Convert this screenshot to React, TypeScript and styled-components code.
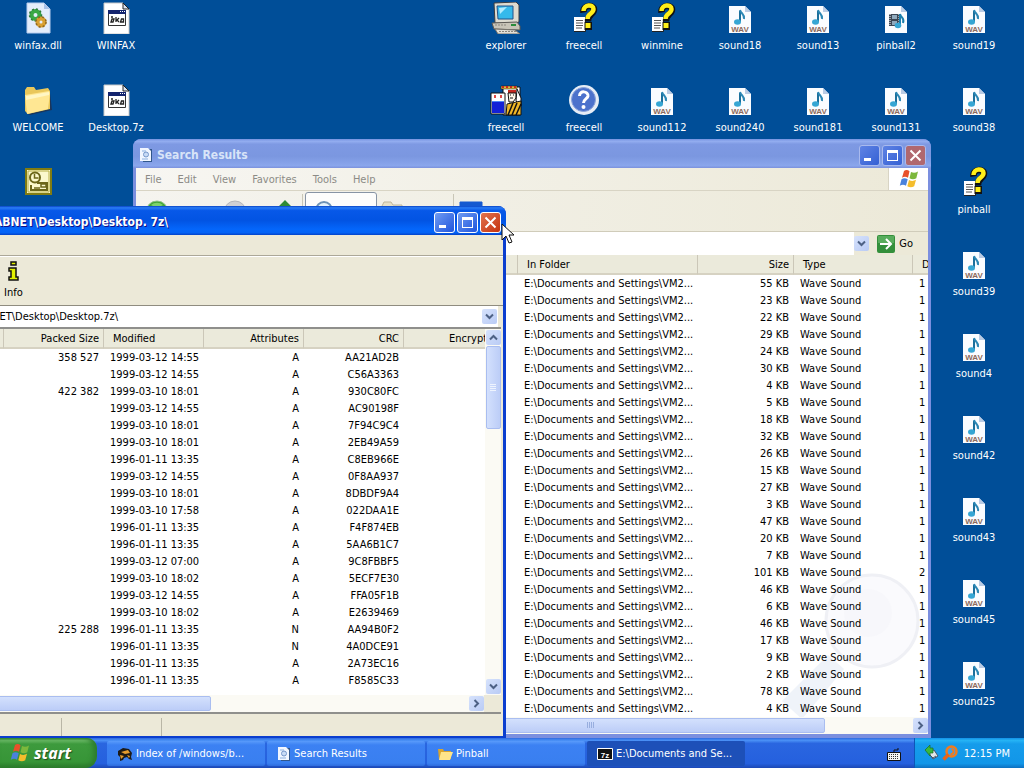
import React from 'react';
import styled, { createGlobalStyle, css } from 'styled-components';

const files = [
  { size: '55 KB', date: '1' },
  { size: '23 KB', date: '1' },
  { size: '22 KB', date: '1' },
  { size: '29 KB', date: '1' },
  { size: '24 KB', date: '1' },
  { size: '30 KB', date: '1' },
  { size: '4 KB', date: '1' },
  { size: '5 KB', date: '1' },
  { size: '18 KB', date: '1' },
  { size: '32 KB', date: '1' },
  { size: '26 KB', date: '1' },
  { size: '15 KB', date: '1' },
  { size: '27 KB', date: '1' },
  { size: '3 KB', date: '1' },
  { size: '47 KB', date: '1' },
  { size: '20 KB', date: '1' },
  { size: '7 KB', date: '1' },
  { size: '101 KB', date: '2' },
  { size: '46 KB', date: '1' },
  { size: '6 KB', date: '1' },
  { size: '46 KB', date: '1' },
  { size: '17 KB', date: '1' },
  { size: '9 KB', date: '1' },
  { size: '2 KB', date: '1' },
  { size: '78 KB', date: '1' },
  { size: '4 KB', date: '1' },
];

const entries = [
  ['358 527', '1999-03-12 14:55', 'A', 'AA21AD2B'],
  ['', '1999-03-12 14:55', 'A', 'C56A3363'],
  ['422 382', '1999-03-10 18:01', 'A', '930C80FC'],
  ['', '1999-03-12 14:55', 'A', 'AC90198F'],
  ['', '1999-03-10 18:01', 'A', '7F94C9C4'],
  ['', '1999-03-10 18:01', 'A', '2EB49A59'],
  ['', '1996-01-11 13:35', 'A', 'C8EB966E'],
  ['', '1999-03-12 14:55', 'A', '0F8AA937'],
  ['', '1999-03-10 18:01', 'A', '8DBDF9A4'],
  ['', '1999-03-10 17:58', 'A', '022DAA1E'],
  ['', '1996-01-11 13:35', 'A', 'F4F874EB'],
  ['', '1996-01-11 13:35', 'A', '5AA6B1C7'],
  ['', '1999-03-12 07:00', 'A', '9C8FBBF5'],
  ['', '1999-03-10 18:02', 'A', '5ECF7E30'],
  ['', '1999-03-12 14:55', 'A', 'FFA05F1B'],
  ['', '1999-03-10 18:02', 'A', 'E2639469'],
  ['225 288', '1996-01-11 13:35', 'N', 'AA94B0F2'],
  ['', '1996-01-11 13:35', 'N', '4A0DCE91'],
  ['', '1996-01-11 13:35', 'A', '2A73EC16'],
  ['', '1996-01-11 13:35', 'A', 'F8585C33'],
];

type IconKind = 'dll' | 'exe' | 'folder' | 'outlook' | 'computer' | 'help' | 'cards' | 'question' | 'wav' | 'midi';

// col / row on the 78x82 desktop grid
const shortcuts: { label: string; kind: IconKind; col: number; row: number }[] = [
  { label: 'winfax.dll', kind: 'dll', col: 1, row: 1 },
  { label: 'WINFAX', kind: 'exe', col: 2, row: 1 },
  { label: 'WELCOME', kind: 'folder', col: 1, row: 2 },
  { label: 'Desktop.7z', kind: 'exe', col: 2, row: 2 },
  { label: '', kind: 'outlook', col: 1, row: 3 },
  { label: 'explorer', kind: 'computer', col: 7, row: 1 },
  { label: 'freecell', kind: 'help', col: 8, row: 1 },
  { label: 'winmine', kind: 'help', col: 9, row: 1 },
  { label: 'sound18', kind: 'wav', col: 10, row: 1 },
  { label: 'sound13', kind: 'wav', col: 11, row: 1 },
  { label: 'pinball2', kind: 'midi', col: 12, row: 1 },
  { label: 'sound19', kind: 'wav', col: 13, row: 1 },
  { label: 'freecell', kind: 'cards', col: 7, row: 2 },
  { label: 'freecell', kind: 'question', col: 8, row: 2 },
  { label: 'sound112', kind: 'wav', col: 9, row: 2 },
  { label: 'sound240', kind: 'wav', col: 10, row: 2 },
  { label: 'sound181', kind: 'wav', col: 11, row: 2 },
  { label: 'sound131', kind: 'wav', col: 12, row: 2 },
  { label: 'sound38', kind: 'wav', col: 13, row: 2 },
  { label: 'pinball', kind: 'help', col: 13, row: 3 },
  { label: 'sound39', kind: 'wav', col: 13, row: 4 },
  { label: 'sound4', kind: 'wav', col: 13, row: 5 },
  { label: 'sound42', kind: 'wav', col: 13, row: 6 },
  { label: 'sound43', kind: 'wav', col: 13, row: 7 },
  { label: 'sound45', kind: 'wav', col: 13, row: 8 },
  { label: 'sound25', kind: 'wav', col: 13, row: 9 },
];

const DesktopIcon = ({ kind }: { kind: IconKind }) => {
  switch (kind) {
    case 'wav':
      return (
        <svg width='32' height='32' viewBox='0 0 32 32'>
          <path d='M5 4h16l6 6v21H5z' fill='#fafcff' />
          <path d='M21 4v6h6z' fill='#b9cbe4' />
          <path d='M16 9v11' stroke='#1b6f9c' strokeWidth='2' fill='none' />
          <path d='M16 8c1 4 5 4 4 9' stroke='#2a86b4' strokeWidth='2' fill='none' />
          <ellipse cx='13.5' cy='20' rx='3.5' ry='2.8' fill='#36a6d4' />
          <IconText x='16' y='30' fill='#8c6a5c'>
            WAV
          </IconText>
        </svg>
      );
    case 'midi':
      return (
        <svg width='32' height='32' viewBox='0 0 32 32'>
          <path d='M5 4h16l6 6v21H5z' fill='#fafcff' />
          <path d='M21 4v6h6z' fill='#b9cbe4' />
          <path d='M9 12h11v12H9z' fill='#3b4654' />
          <path d='M12 13h5v4h-5zM12 19h5v4h-5z' fill='#8fa9bd' />
          <path d='M10 12v12M19 12v12' stroke='#fff' strokeDasharray='1 1' />
          <path d='M20 12v11M20 12c1 4 5 4 3 9' stroke='#1b7fae' strokeWidth='2' fill='none' />
          <ellipse cx='18' cy='23.5' rx='3.3' ry='2.7' fill='#36a6d4' />
        </svg>
      );
    case 'dll':
      return (
        <svg width='32' height='32' viewBox='0 0 32 32'>
          <path d='M5 1h17l6 6v24H5z' fill='#e4edfb' stroke='#b9cdee' />
          <path d='M22 1v6h6z' fill='#a9c2e8' />
          <circle cx='13.5' cy='13' r='4' fill='none' stroke='#3aa845' strokeWidth='4' />
          <circle cx='13.5' cy='13' r='6' fill='none' stroke='#2c7a3a' strokeWidth='1.5' strokeDasharray='2 2' />
          <circle cx='19' cy='20' r='3.5' fill='none' stroke='#d9a032' strokeWidth='4' />
          <circle cx='19' cy='20' r='5' fill='none' stroke='#8f6a24' strokeWidth='1.5' strokeDasharray='2 2' />
        </svg>
      );
    case 'exe':
      return (
        <svg width='32' height='32' viewBox='0 0 32 32'>
          <path d='M4 1h19l6 6v25H4z' fill='#fff' stroke='#c9c9c9' />
          <path d='M23 1v6h6z' fill='#dce4f0' stroke='#222' />
          <path d='M8.5 8.5h17v15h-17z' fill='#fff' stroke='#333' />
          <path d='M8 8h18v4H8z' fill='#14246e' />
          <path d='M20 9h1v1h-1zM22 9h1v1h-1zM24 9h1v1h-1z' fill='#fff' />
          <path
            d='M11 20l1-3h2l-1 3zM16 15v5M19 16l-2 2 2 2M20.5 20l1-3h2v3zM11 15h2'
            stroke='#222'
            strokeWidth='1.3'
            fill='none'
          />
        </svg>
      );
    case 'folder':
      return (
        <svg width='32' height='32' viewBox='0 0 32 32'>
          <path d='M6 30l22-5V9l2 17-22 5z' fill='#1b355a' />
          <path d='M3 6l2-3h7l2 3 12-2 2 3v18L6 30 3 27z' fill='#e9c75b' />
          <path d='M3 11l24-4 1 2-2 16-21 5z' fill='#ffe793' />
          <path d='M4 12l23-4v3L4 16z' fill='#fff6c4' />
        </svg>
      );
    case 'outlook':
      return (
        <svg width='32' height='32' viewBox='0 0 32 32'>
          <path d='M4 3h25v25H4z' fill='#fbf8cc' stroke='#827c12' strokeWidth='2' />
          <path d='M6 5h21v21H6z' fill='none' stroke='#b6ae45' />
          <path d='M15 17h10v7H9v-5' fill='none' stroke='#6c671a' strokeWidth='2' />
          <circle cx='13' cy='11.5' r='5' fill='#fbf8cc' stroke='#6c671a' strokeWidth='2' />
          <path d='M12.5 8v4h4M19 18h5v3h-5zM12 22h6' fill='none' stroke='#6c671a' strokeWidth='1.5' />
        </svg>
      );
    case 'computer':
      return (
        <svg width='32' height='32' viewBox='0 0 32 32'>
          <path d='M4 1l22-1 3 3v17l-4 1H5z' fill='#dedbd0' stroke='#3c3c40' />
          <path d='M7 4h16v13H8z' fill='#35b9ec' stroke='#23528a' />
          <path d='M9 6l8-1-7 7z' fill='#b2ecff' />
          <path d='M2 21l25-1 3 4v4l-26-1z' fill='#c9c4b8' stroke='#5c5955' />
          <path d='M5 27l20 1 5 4H8z' fill='#e4e0d7' stroke='#77736b' />
          <path d='M9 29.5h17M5 23h12' stroke='#8b877f' strokeDasharray='2 1' />
          <path d='M21 23h5' stroke='#2a8c3b' strokeWidth='2' />
        </svg>
      );
    case 'help':
      return (
        <svg width='32' height='32' viewBox='0 0 32 32'>
          <path d='M6 15h11v14H6z' fill='#fff' />
          <path d='M17.5 18v11.5H6' fill='none' stroke='#222' />
          <path d='M8 18.500h7M8 21h7M8 23.5h7M8 26h6' stroke='#555' />
          <path d='M15.5 10.500c-1-8 10.500-8 10.500-3 0 5-6 4-6 12' fill='none' stroke='#111' strokeWidth='6.5' />
          <path d='M16.5 20h7.500v8h-7.500z' fill='#111' />
          <path d='M15.500 9c0-7 10-7 10-2 0 5-6 4-6 10' fill='none' stroke='#ffef19' strokeWidth='4.5' />
          <path d='M17.500 21h5v5h-5z' fill='#ffef19' />
        </svg>
      );
    case 'cards':
      return (
        <svg width='32' height='32' viewBox='0 0 32 32'>
          <path d='M13 3h17v28H13z' fill='#fff' stroke='#111' />
          <path d='M11 2h16v3H11z' fill='#e0b93c' stroke='#111' strokeWidth='.5' />
          <path d='M12 3h14' stroke='#c6281f' strokeDasharray='2 2' strokeWidth='2' />
          <path d='M18 6h8v3h-8z' fill='#c6281f' />
          <path d='M18 9h8v5l-3 4h-4z' fill='#fff6e8' stroke='#111' />
          <path d='M20 11h1M23 11h1M20 14h3' stroke='#111' />
          <path d='M27 5l4 9v8l-5-5z' fill='#fff' stroke='#111' />
          <path d='M17 20l14-3v14H16z' fill='#f0b728' stroke='#111' />
          <path d='M18 31l5-12M22 31l5-12M26 31l5-11' stroke='#111' strokeWidth='1.5' />
          <path d='M1 9h14v21H1z' fill='#fff' stroke='#111' />
          <path d='M2 17h12v12H2z' fill='#1320d6' />
          <path d='M4 11h2v3H4zM10 11h2v3h-2z' fill='#e04a45' />
          <path d='M2 17.500h12' stroke='#4d86f5' />
        </svg>
      );
    case 'question':
      return (
        <svg width='32' height='32' viewBox='0 0 32 32'>
          <circle cx='16' cy='16' r='15' fill='#e6edf6' />
          <circle cx='15.5' cy='15.5' r='12' fill='#4c72cc' stroke='#8ba4db' />
          <path d='M11.5 12c0-6 9-5 8.500 0-.5 3-4.500 3-4.500 7' fill='none' stroke='#fff' strokeWidth='3' />
          <circle cx='15.5' cy='23' r='2' fill='#fff' />
        </svg>
      );
  }
};

const WindowsFlag = ({ size }: { size: number }) => (
  <svg width={size} height={size} viewBox='0 0 20 20'>
    <path d='M5 2c2-1.500 4-1 5.500.3L9 8.800C7 7.500 5 7.500 3 8.700z' fill='#e8502a' />
    <path d='M12 3c2.500 1.300 4.500 1 7-.5l-1.700 6.700c-2.300 1.500-4.800 1.200-6.800.1z' fill='#7cb83c' />
    <path d='M2.500 10.200C4.500 9 6.500 9 8.700 10.300L7 16.800C5 15.500 3 15.500.8 16.800z' fill='#4a82dc' />
    <path d='M10 11c2.500 1.200 4.500 1.200 7-.2l-1.800 6.500c-2.300 1.400-4.700 1.300-6.900 0z' fill='#f5bd2c' />
  </svg>
);

const ResultIcon = () => (
  <svg width='14' height='16' viewBox='0 0 14 16'>
    <path d='M4 2h9v13H4z' fill='#31578c' />
    <path d='M1 1h8l3 3v10H1z' fill='#f1f6ff' />
    <path d='M3 4h4M3 12h6' stroke='#8bb0df' />
    <circle cx='7' cy='7.5' r='2.5' fill='#c8dbf6' stroke='#7496c9' />
  </svg>
);

const MinimizeGlyph = () => (
  <svg width='15' height='15' viewBox='0 0 15 15'>
    <path d='M2 10h7v3H2z' fill='currentColor' />
  </svg>
);

const MaximizeGlyph = () => (
  <svg width='15' height='15' viewBox='0 0 15 15'>
    <path d='M2 2h11v11H2zM3 5v7h9V5z' fill='currentColor' fillRule='evenodd' />
  </svg>
);

const CloseGlyph = () => (
  <svg width='15' height='15' viewBox='0 0 15 15'>
    <path d='M2.500 2.500l10 10M12.500 2.500l-10 10' stroke='currentColor' strokeWidth='2' />
  </svg>
);

const rotations = { down: 0, left: 90, up: 180, right: 270 };

const Chevron = ({ to }: { to: keyof typeof rotations }) => (
  <svg width='9' height='9' viewBox='0 0 9 9'>
    <path
      d='M1 2.500l3.500 3.500L8 2.500'
      fill='none'
      stroke='#4d6185'
      strokeWidth='2'
      transform={`rotate(${rotations[to]} 4.5 4.5)`}
    />
  </svg>
);

const Controls = ({ active }: { active: boolean }) => (
  <ControlGroup>
    <ControlButton $active={active} aria-label='Minimize'>
      <MinimizeGlyph />
    </ControlButton>
    <ControlButton $active={active} aria-label='Maximize'>
      <MaximizeGlyph />
    </ControlButton>
    <ControlButton $active={active} $close aria-label='Close'>
      <CloseGlyph />
    </ControlButton>
  </ControlGroup>
);

const SearchWindow = () => (
  <SearchFrame>
    <TitleBar $active={false}>
      <ResultIcon />
      <Title>Search Results</Title>
      <Controls active={false} />
    </TitleBar>
    <SearchContent>
      <MenuBar>
        {['File', 'Edit', 'View', 'Favorites', 'Tools', 'Help'].map((name) => (
          <MenuItem key={name}>{name}</MenuItem>
        ))}
        <Brand>
          <WindowsFlag size={20} />
        </Brand>
      </MenuBar>
      <SearchToolbar>
        <ToolButton aria-label='Back' $width={78}>
          <svg width='24' height='24' viewBox='0 0 24 24'>
            <circle cx='12' cy='12' r='11' fill='#42a536' stroke='#8fc487' />
            <path d='M6 5a9 9 0 0 1 12 0l-6 3z' fill='#7fd26b' />
          </svg>
        </ToolButton>
        <ToolButton aria-label='Forward' $width={50}>
          <svg width='24' height='24' viewBox='0 0 24 24'>
            <circle cx='12' cy='12' r='11' fill='#cfd0d3' stroke='#b5b6ba' />
          </svg>
        </ToolButton>
        <ToolButton aria-label='Up' $width={30}>
          <svg width='24' height='24' viewBox='0 0 24 24'>
            <path d='M3 8h9l2 3h8v11H3z' fill='#f0d56f' />
            <path d='M12 0l7 7h-4v7H9V7H5z' fill='#2f8a35' />
          </svg>
        </ToolButton>
        <Divider />
        <ToolButton aria-label='Search' $width={72} $pressed>
          <svg width='24' height='24' viewBox='0 0 24 24'>
            <circle cx='12' cy='9' r='8' fill='#e3f2fb' stroke='#6e93b5' strokeWidth='2' />
          </svg>
        </ToolButton>
        <ToolButton aria-label='Folders' $width={74}>
          <svg width='24' height='24' viewBox='0 0 24 24'>
            <path d='M2 6l2-4h7l2 3h9v15H2z' fill='#e6e0c6' stroke='#bdb69d' />
          </svg>
        </ToolButton>
        <Divider />
        <ToolButton aria-label='Views' $width={36}>
          <svg width='24' height='24' viewBox='0 0 24 24'>
            <path d='M1 2h22v20H1z' fill='#fff' stroke='#1559d0' />
            <path d='M1 2h22v5H1z' fill='#1559d0' />
          </svg>
        </ToolButton>
      </SearchToolbar>
      <AddressRow>
        <AddressInput aria-label='Address' />
        <ArrowButton aria-label='Show addresses'>
          <Chevron to='down' />
        </ArrowButton>
        <GoButton>
          <svg width='18' height='18' viewBox='0 0 18 18'>
            <rect width='18' height='18' rx='2' fill='#338f3b' />
            <path d='M1 1h16v7H1z' fill='#57ac5c' />
            <path d='M3 9h11M9 4l5 5-5 5' fill='none' stroke='#fff' strokeWidth='2' />
          </svg>
          Go
        </GoButton>
      </AddressRow>
      <ListArea>
        <Magnifier viewBox='0 0 150 160' width='150' height='160'>
          <path d='M8 136l46-46 16 14-42 50z' fill='#eff3f9' />
          <circle cx='98' cy='56' r='46' fill='#fafafd' stroke='#eff0f5' strokeWidth='3' />
          <circle cx='94' cy='48' r='24' fill='#f7f7fb' />
        </Magnifier>
        <ListTable>
          <colgroup>
            <col style={{ width: 382 }} />
            <col style={{ width: 180 }} />
            <col style={{ width: 96 }} />
            <col style={{ width: 119 }} />
            <col />
          </colgroup>
          <thead>
            <tr>
              <HeadCell />
              <HeadCell>In Folder</HeadCell>
              <HeadCell $right>Size</HeadCell>
              <HeadCell>Type</HeadCell>
              <HeadCell>D</HeadCell>
            </tr>
          </thead>
          <tbody>
            {files.map(({ size, date }, i) => (
              <tr key={i}>
                <Cell />
                <Cell>E:\Documents and Settings\VM2...</Cell>
                <Cell $right>{size}</Cell>
                <Cell>Wave Sound</Cell>
                <Cell>{date}</Cell>
              </tr>
            ))}
          </tbody>
        </ListTable>
      </ListArea>
      <HorizontalScroll $offset={221}>
        <HorizontalThumb $share={82}>
          <svg width='8' height='7' viewBox='0 0 8 7'>
            <path d='M.5 0v6M2.500 0v6M4.500 0v6M6.500 0v6' stroke='#98aede' />
          </svg>
        </HorizontalThumb>
        <ArrowButton aria-label='Scroll right'>
          <Chevron to='right' />
        </ArrowButton>
      </HorizontalScroll>
    </SearchContent>
  </SearchFrame>
);

const ArchiveWindow = () => (
  <ArchiveFrame>
    <TitleBar $active>
      <Title>ABNET\Desktop\Desktop. 7z\</Title>
      <Controls active />
    </TitleBar>
    <ArchiveContent>
      <MenuStrip />
      <ArchiveToolbar>
        <InfoButton>
          <svg width='14' height='21' viewBox='0 0 14 21'>
            <path d='M5 1h5v3H5zM3 7h7v9h2v3H3v-3h2v-6H3z' fill='#e2f000' stroke='#111' strokeWidth='1.5' />
          </svg>
          Info
        </InfoButton>
      </ArchiveToolbar>
      <PathRow>
        <PathInput aria-label='Path' defaultValue='NET\Desktop\Desktop.7z\' />
        <ArrowButton aria-label='Show folders'>
          <Chevron to='down' />
        </ArrowButton>
      </PathRow>
      <Panel>
        <PanelBody>
          <ListTable>
            <colgroup>
              <col style={{ width: 16 }} />
              <col style={{ width: 100 }} />
              <col style={{ width: 100 }} />
              <col style={{ width: 100 }} />
              <col style={{ width: 100 }} />
              <col />
            </colgroup>
            <thead>
              <tr>
                <HeadCell />
                <HeadCell $right>Packed Size</HeadCell>
                <HeadCell>Modified</HeadCell>
                <HeadCell $right>Attributes</HeadCell>
                <HeadCell $right>CRC</HeadCell>
                <HeadCell $indent={45}>Encrypted</HeadCell>
              </tr>
            </thead>
            <tbody>
              {entries.map(([packed, modified, attributes, crc], i) => (
                <tr key={i}>
                  <Cell />
                  <Cell $right>{packed}</Cell>
                  <Cell>{modified}</Cell>
                  <Cell $right>{attributes}</Cell>
                  <Cell $right>{crc}</Cell>
                  <Cell />
                </tr>
              ))}
            </tbody>
          </ListTable>
          <VerticalScroll>
            <ArrowButton aria-label='Scroll up'>
              <Chevron to='up' />
            </ArrowButton>
            <VerticalThumb>
              <svg width='7' height='8' viewBox='0 0 7 8'>
                <path d='M0 .5h6M0 2.500h6M0 4.500h6M0 6.500h6' stroke='#eef4fe' />
              </svg>
            </VerticalThumb>
            <ArrowButton aria-label='Scroll down'>
              <Chevron to='down' />
            </ArrowButton>
          </VerticalScroll>
        </PanelBody>
        <PanelFoot>
          <HorizontalScroll>
            <HorizontalThumb $share={45} />
            <ArrowButton aria-label='Scroll right'>
              <Chevron to='right' />
            </ArrowButton>
          </HorizontalScroll>
        </PanelFoot>
      </Panel>
      <StatusBar>
        <StatusCell $width={74} />
        <StatusCell $width={100} />
      </StatusBar>
    </ArchiveContent>
  </ArchiveFrame>
);

const App = () => {
  return (
    <>
      <GlobalStyle />
      <Screen>
        <Desktop>
          <IconGrid>
            {shortcuts.map(({ label, kind, col, row }) => (
              <Shortcut key={`${col}-${row}`} $col={col} $row={row}>
                <DesktopIcon kind={kind} />
                <span>{label}</span>
              </Shortcut>
            ))}
          </IconGrid>
          <SearchWindow />
          <ArchiveWindow />
          <Pointer width='13' height='21' viewBox='0 0 13 21'>
            <path d='M1 1v16l4-4 3 7 3-1-3-7h5z' fill='#fff' stroke='#111' />
          </Pointer>
        </Desktop>
        <Taskbar>
          <StartButton>
            <WindowsFlag size={20} />
            start
          </StartButton>
          <Tasks>
            <TaskButton>
              <svg width='16' height='16' viewBox='0 0 16 16'>
                <path d='M1 5l5-3 6 1 3 4-1 4 1 3-3-1-2-2-3 1-1 2-3 1v-4l-2-2z' fill='#1d1a16' />
                <path d='M4 6l7-2 2 3-5 1zM3 9l4 1-3 3zM10 9l3 1-1 2z' fill='#e69c2d' />
              </svg>
              Index of /windows/b...
            </TaskButton>
            <TaskButton>
              <ResultIcon />
              Search Results
            </TaskButton>
            <TaskButton>
              <svg width='16' height='16' viewBox='0 0 16 16'>
                <path d='M1 3h5l1 2h7v8H2z' fill='#d9a530' />
                <path d='M4 6h12l-3 8H2z' fill='#ffe48a' />
              </svg>
              Pinball
            </TaskButton>
            <TaskButton $active>
              <svg width='16' height='16' viewBox='0 0 16 16'>
                <path d='M.5 2.500h15v11H.5z' fill='#111' stroke='#fff' />
                <IconText x='8' y='12' fill='#fff' fontSize='10'>
                  7z
                </IconText>
              </svg>
              E:\Documents and Se...
            </TaskButton>
          </Tasks>
          <LanguageButton aria-label='Keyboard'>
            <svg width='14' height='13' viewBox='0 0 14 13'>
              <path d='M7 4V2h4V0' fill='none' stroke='#111' />
              <path d='M.5 4.500h13v8H.5z' fill='#f4f4f0' stroke='#111' />
              <path d='M2 6.500h10M2 8.500h10M2 10.500h10' stroke='#333' strokeDasharray='1 1' />
            </svg>
          </LanguageButton>
          <Tray>
            <svg width='16' height='16' viewBox='0 0 16 16'>
              <path d='M5 7l5 7 5-3-4-6z' fill='#e3e7ea' stroke='#47566a' />
              <path d='M7 10l3 3 3-2' fill='none' stroke='#47566a' />
              <path d='M2 5l5-5v3h3v5H7v3z' fill='#3bb83a' stroke='#186b26' strokeWidth='.7' />
            </svg>
            <svg width='16' height='16' viewBox='0 0 16 16'>
              <circle cx='9.5' cy='6.5' r='5' fill='#3aa0ee' stroke='#f07c1c' strokeWidth='2.5' />
              <path d='M9.500 4a2.500 2.500 0 1 1-1 5' fill='none' stroke='#f07c1c' strokeWidth='2' />
              <path d='M6.500 9.500l-5 5' stroke='#e8651a' strokeWidth='3.5' />
            </svg>
            <time>12:15 PM</time>
          </Tray>
        </Taskbar>
      </Screen>
    </>
  );
};

export default App;

const GlobalStyle = createGlobalStyle`
  * {
    box-sizing: border-box;
  }
  body {
    margin: 0;
    overflow: hidden;
    font-family: 'DejaVu Sans Condensed', 'DejaVu Sans', sans-serif;
    font-size: 11px;
    line-height: 13px;
    color: #000;
  }
  button,
  input {
    margin: 0;
    padding: 0;
    border: 0;
    background: none;
    font: inherit;
    color: inherit;
  }
  svg {
    display: block;
    flex: none;
  }
`;

const Screen = styled.div`
  display: flex;
  flex-direction: column;
  height: 100vh;
`;

const Desktop = styled.main`
  position: relative;
  flex: 1;
  min-height: 0;
  overflow: hidden;
  background-color: #004e98;
`;

const IconGrid = styled.div`
  display: grid;
  grid-template-columns: repeat(13, 78px);
  grid-auto-rows: 82px;
  justify-content: end;
  padding: 2px 11px 0 0;
`;

const Shortcut = styled.button<{ $col: number; $row: number }>`
  grid-column: ${({ $col }) => $col};
  grid-row: ${({ $row }) => $row};
  display: flex;
  flex-direction: column;
  align-items: center;
  gap: 5px;
  color: #fff;
`;

const IconText = styled.text`
  font-family: 'Liberation Sans', sans-serif;
  font-size: 8px;
  font-weight: 700;
  text-anchor: middle;
`;

// 창 공통
const Frame = styled.section`
  position: absolute;
  display: flex;
  flex-direction: column;
  padding: 0 3px 4px;
  border-radius: 8px 8px 0 0;
`;

const SearchFrame = styled(Frame)`
  top: 139px;
  left: 133px;
  width: 798px;
  background-color: #7b8fdf;
`;

const ArchiveFrame = styled(Frame)`
  top: 206px;
  left: -12px;
  width: 518px;
  padding-left: 0;
  background-color: #0b3ecf;
`;

const TitleBar = styled.header<{ $active: boolean }>`
  display: flex;
  align-items: center;
  gap: 4px;
  height: 29px;
  margin: 0 -3px;
  padding: 3px 5px 0 6px;
  border-radius: 8px 8px 0 0;
  color: #d8e4f8;
  background: linear-gradient(#7593e0 0%, #93adf0 8%, #7e99e3 18%, #7b97e0 60%, #8aa6ec 92%, #7b90dc 100%);
  ${({ $active }) =>
    $active &&
    css`
      margin-left: 0;
      color: #fff;
      text-shadow: 1px 1px #0f1089;
      background: linear-gradient(#0842c4 0%, #2a7cf5 6%, #0758e8 16%, #0254e3 50%, #0466fb 80%, #0463f5 92%, #0342c8 100%);
    `}
`;

const Title = styled.h1`
  flex: 1;
  margin: 0;
  font-size: 12px;
  font-weight: 700;
  white-space: nowrap;
`;

const ControlGroup = styled.div`
  display: flex;
  gap: 2px;
`;

const ControlButton = styled.button<{ $active: boolean; $close?: boolean }>`
  display: flex;
  align-items: center;
  justify-content: center;
  width: 21px;
  height: 21px;
  border: 1px solid ${({ $active }) => ($active ? '#fff' : '#a9baee')};
  border-radius: 3px;
  color: #fff;
  background: ${({ $active, $close }) => {
    if ($close) return $active ? 'linear-gradient(135deg, #e0734f, #c6330f)' : '#b0686f';
    return $active ? 'linear-gradient(135deg, #6f9bf2, #1f55dd)' : 'linear-gradient(135deg, #5f83e4, #3460d4)';
  }};
`;

const SearchContent = styled.div`
  background-color: #efecdd;
`;

const MenuBar = styled.nav`
  display: flex;
  align-items: stretch;
  height: 23px;
  padding-left: 1px;
  border-bottom: 1px solid #d8d4c4;
  background: linear-gradient(90deg, #f7f6f2, #ece9d8);
`;

const MenuItem = styled.button`
  padding: 0 8px;
  color: #8c8b86;
`;

const Brand = styled.span`
  display: flex;
  align-items: center;
  justify-content: center;
  width: 40px;
  margin-left: auto;
  border-left: 1px solid #d8d4c4;
  background-color: #fff;
`;

const SearchToolbar = styled.div`
  display: flex;
  height: 41px;
  padding: 1px 0 1px 6px;
  border-bottom: 1px solid #d0ccba;
  background: linear-gradient(90deg, #f5f4ef, #ece9d8);
`;

const ToolButton = styled.button<{ $width: number; $pressed?: boolean }>`
  display: flex;
  width: ${({ $width }) => $width}px;
  padding: 8px 3px;
  ${({ $pressed }) =>
    $pressed &&
    css`
      padding-left: 6px;
      border: 1px solid #8794a5;
      border-radius: 3px;
      background-color: #fdfdfc;
    `}
`;

const Divider = styled.span`
  width: 1px;
  margin: 2px 2px;
  background-color: #c9c6b7;
`;

const AddressRow = styled.div`
  display: flex;
  align-items: center;
  height: 23px;
  padding-right: 15px;
  background-color: #ece9d8;
`;

const AddressInput = styled.input`
  flex: 1;
  align-self: stretch;
  background-color: #fff;
`;

const ArrowButton = styled.button`
  display: flex;
  align-items: center;
  justify-content: center;
  flex: none;
  width: 15px;
  height: 15px;
  border-radius: 2px;
  background: linear-gradient(135deg, #d6e2fc, #b9cbf5);
`;

const GoButton = styled.button`
  display: flex;
  align-items: center;
  gap: 4px;
  margin-left: 8px;
`;

const ListArea = styled.div`
  position: relative;
  overflow: hidden;
  background-color: #fff;
`;

// 목록 뒤에 깔리는 돋보기
const Magnifier = styled.svg`
  position: absolute;
  right: 4px;
  bottom: -8px;
`;

const ListTable = styled.table`
  position: relative;
  flex: 1;
  width: 100%;
  min-width: 0;
  table-layout: fixed;
  border-collapse: separate;
  border-spacing: 0;
`;

const HeadCell = styled.th<{ $right?: boolean; $indent?: number }>`
  height: 20px;
  padding: 0 4px 0 ${({ $indent }) => $indent ?? 9}px;
  border-right: 1px solid #cbc7b8;
  border-bottom: 2px solid #d6d2c2;
  overflow: hidden;
  font-weight: 400;
  text-align: ${({ $right }) => ($right ? 'right' : 'left')};
  white-space: nowrap;
  background-color: #ebeadb;
  &:last-child {
    padding-right: 0;
    border-right: 0;
  }
`;

const Cell = styled.td<{ $right?: boolean }>`
  height: 17px;
  padding: 0 5px 0 6px;
  overflow: hidden;
  text-align: ${({ $right }) => ($right ? 'right' : 'left')};
  white-space: nowrap;
  &:last-child {
    padding-right: 0;
  }
`;

const HorizontalScroll = styled.div<{ $offset?: number }>`
  display: flex;
  align-items: center;
  justify-content: space-between;
  flex: 1;
  height: 17px;
  padding-left: ${({ $offset }) => $offset ?? 0}px;
  background-color: #fbfaf4;
`;

const HorizontalThumb = styled.div<{ $share: number }>`
  display: flex;
  align-items: center;
  justify-content: center;
  width: ${({ $share }) => $share}%;
  height: 15px;
  border: 1px solid #a9bdf0;
  border-radius: 2px;
  background: linear-gradient(#d3e0fd, #bccdf7);
`;

const ArchiveContent = styled.div`
  background-color: #ece9d8;
`;

const MenuStrip = styled.div`
  height: 21px;
  border-bottom: 1px solid #aca899;
`;

const ArchiveToolbar = styled.div`
  display: flex;
  height: 50px;
  padding: 4px 16px;
  border-top: 1px solid #fff;
  border-bottom: 1px solid #8f8c7f;
`;

const InfoButton = styled.button`
  display: flex;
  flex-direction: column;
  align-items: center;
  gap: 4px;
`;

const PathRow = styled.div`
  display: flex;
  align-items: center;
  height: 21px;
  margin-right: 5px;
  padding-right: 1px;
  background-color: #fff;
`;

const PathInput = styled.input`
  flex: 1;
  padding-left: 4px;
`;

const Panel = styled.div`
  border-top: 2px solid #8f8f8c;
  border-bottom: 2px solid #8f8f8c;
  margin-right: 2px;
`;

const PanelBody = styled.div`
  display: flex;
  align-items: flex-start;
  height: 366px;
  background-color: #fff;
`;

const VerticalScroll = styled.div`
  display: flex;
  flex-direction: column;
  align-items: center;
  align-self: stretch;
  gap: 1px;
  width: 16px;
  padding: 1px 0;
  background-color: #fbfaf4;
  button:last-child {
    margin-top: auto;
  }
`;

const VerticalThumb = styled.div`
  display: flex;
  align-items: center;
  justify-content: center;
  width: 15px;
  height: 83px;
  border: 1px solid #a9bdf0;
  border-radius: 2px;
  background: linear-gradient(90deg, #d3e0fd, #bccdf7);
`;

const PanelFoot = styled.div`
  display: flex;
  padding-right: 17px;
`;

const StatusBar = styled.footer`
  display: flex;
  height: 22px;
  padding-top: 4px;
`;

const StatusCell = styled.div<{ $width: number }>`
  width: ${({ $width }) => $width}px;
  border-right: 1px solid #b9b6a6;
`;

const Pointer = styled.svg`
  position: absolute;
  top: 223px;
  left: 501px;
`;

const Taskbar = styled.footer`
  display: flex;
  align-items: stretch;
  flex: none;
  height: 30px;
  color: #fff;
  background: linear-gradient(#2f6ae0 0%, #4a90f5 8%, #2a66e0 18%, #2560de 85%, #1c48b4 100%);
`;

const StartButton = styled.button`
  display: flex;
  align-items: center;
  gap: 4px;
  flex: none;
  width: 97px;
  padding-left: 10px;
  border-radius: 0 10px 12px 0;
  font-family: 'Noto Sans', sans-serif;
  font-size: 16px;
  font-style: italic;
  font-weight: 700;
  color: #fff;
  text-shadow: 1px 1px 1px #1f4d1f;
  background: linear-gradient(#338a33 0%, #6cbb68 8%, #3d9a3d 20%, #379537 80%, #2a7a2a 100%);
  box-shadow: inset -4px 0 5px #2d7d2d;
`;

const Tasks = styled.div`
  display: flex;
  flex: 1;
  gap: 2px;
  min-width: 0;
  padding: 3px 0 2px 10px;
`;

const TaskButton = styled.button<{ $active?: boolean }>`
  display: flex;
  align-items: center;
  gap: 3px;
  flex: 0 1 158px;
  min-width: 0;
  padding-left: 10px;
  border-radius: 2px;
  overflow: hidden;
  white-space: nowrap;
  background: ${({ $active }) => ($active ? '#1d50b8' : 'linear-gradient(#5a9bfb 0%, #3c81f3 16%, #397ff0 88%, #2e6cdd 100%)')};
`;

const LanguageButton = styled.button`
  display: flex;
  align-items: center;
  padding: 2px 13px 0;
`;

const Tray = styled.div`
  display: flex;
  align-items: center;
  gap: 3px;
  padding: 0 14px 0 8px;
  border-left: 1px solid #0d56b8;
  background: linear-gradient(#1290e8 0%, #25b3f5 8%, #159ceb 20%, #1296e8 85%, #0d70c0 100%);
  time {
    padding-left: 3px;
  }
`;
